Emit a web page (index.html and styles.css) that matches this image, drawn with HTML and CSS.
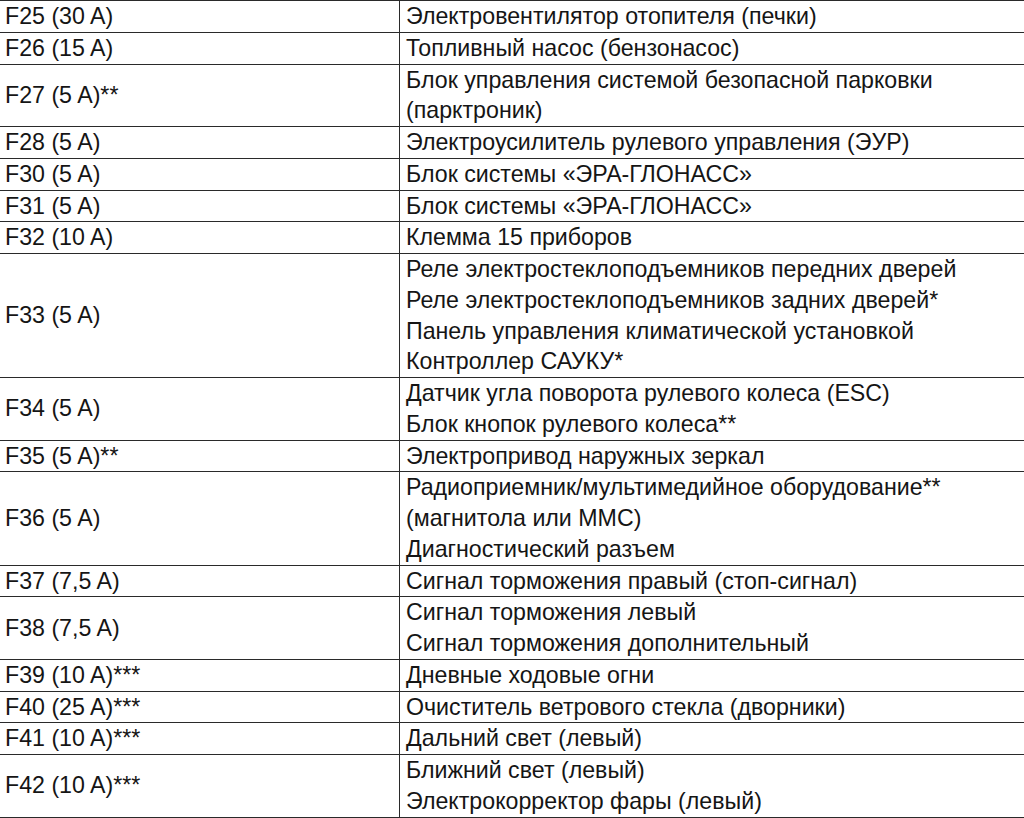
FILE: index.html
```html
<!DOCTYPE html>
<html lang="ru">
<head>
<meta charset="utf-8">
<link rel="stylesheet" href="styles.css">
</head>
<body>
<table class="fuses">
<tr><td class="k">F25 (30 A)</td><td class="v">Электровентилятор отопителя (печки)</td></tr>
<tr><td class="k">F26 (15 A)</td><td class="v">Топливный насос (бензонасос)</td></tr>
<tr><td class="k">F27 (5 A)**</td><td class="v">Блок управления системой безопасной парковки<br>(парктроник)</td></tr>
<tr><td class="k">F28 (5 A)</td><td class="v">Электроусилитель рулевого управления (ЭУР)</td></tr>
<tr><td class="k">F30 (5 A)</td><td class="v">Блок системы «ЭРА-ГЛОНАСС»</td></tr>
<tr><td class="k">F31 (5 A)</td><td class="v">Блок системы «ЭРА-ГЛОНАСС»</td></tr>
<tr><td class="k">F32 (10 A)</td><td class="v">Клемма 15 приборов</td></tr>
<tr><td class="k">F33 (5 A)</td><td class="v">Реле электростеклоподъемников передних дверей<br>Реле электростеклоподъемников задних дверей*<br>Панель управления климатической установкой<br>Контроллер САУКУ*</td></tr>
<tr><td class="k">F34 (5 A)</td><td class="v">Датчик угла поворота рулевого колеса (ESC)<br>Блок кнопок рулевого колеса**</td></tr>
<tr><td class="k">F35 (5 A)**</td><td class="v">Электропривод наружных зеркал</td></tr>
<tr><td class="k">F36 (5 A)</td><td class="v">Радиоприемник/мультимедийное оборудование**<br>(магнитола или ММС)<br>Диагностический разъем</td></tr>
<tr><td class="k">F37 (7,5 A)</td><td class="v">Сигнал торможения правый (стоп-сигнал)</td></tr>
<tr><td class="k">F38 (7,5 A)</td><td class="v">Сигнал торможения левый<br>Сигнал торможения дополнительный</td></tr>
<tr><td class="k">F39 (10 A)***</td><td class="v">Дневные ходовые огни</td></tr>
<tr><td class="k">F40 (25 A)***</td><td class="v">Очиститель ветрового стекла (дворники)</td></tr>
<tr><td class="k">F41 (10 A)***</td><td class="v">Дальний свет (левый)</td></tr>
<tr><td class="k">F42 (10 A)***</td><td class="v">Ближний свет (левый)<br>Электрокорректор фары (левый)</td></tr>
</table>
</body>
</html>
```
FILE: styles.css
```css
html, body {
  margin: 0;
  padding: 0;
  background: #fff;
  overflow: hidden;
}
.fuses {
  border-collapse: collapse;
  width: 1024px;
  font-family: "Liberation Sans", Arial, sans-serif;
  font-size: 23.2px;
  color: #151515;
}
.fuses td {
  border-top: 1px solid #2a2a2a;
  border-bottom: 1px solid #2a2a2a;
  padding: 0;
  line-height: 30.75px;
  vertical-align: middle;
  white-space: nowrap;
}
.fuses td.k {
  width: 394px;
  padding-left: 5px;
  border-right: 1px solid #2a2a2a;
}
.fuses td.v {
  padding-left: 6px;
}
```
